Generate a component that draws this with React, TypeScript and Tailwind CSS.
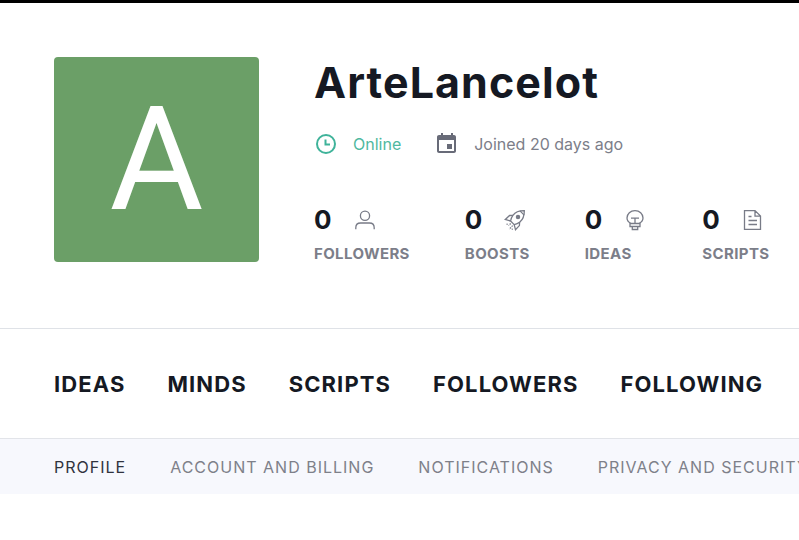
import { ReactNode } from "react";

const iconClass = "h-6 w-6 text-[#787b87]";

function UserIcon() {
  return (
    <svg className={iconClass} viewBox="0 0 24 24" fill="none" stroke="currentColor" strokeWidth="1.3" aria-hidden="true">
      <circle cx="12" cy="7.8" r="4.6" />
      <path d="M2.8 21.2v-1.4c0-2.9 2-4.8 4.8-4.8h8.8c2.8 0 4.8 1.9 4.8 4.8v1.4" />
    </svg>
  );
}

function RocketIcon() {
  return (
    <svg className={iconClass} viewBox="0 0 24 24" fill="none" stroke="currentColor" strokeWidth="1.3" aria-hidden="true">
      <path d="M21.3 2.7c-5-.1-9 1.5-11.4 4.7-1.3 1.8-2.1 3.7-2.3 5.6l3.6 3.6c2.2-.3 4-1.1 5.7-2.6 3-2.6 4.5-6.4 4.4-11.3z" />
      <path d="M10 7.3 6.6 7.5 2.3 11.5l5.3 1.5M16.6 14.2l-.2 3.4-3.9 4.2-1.3-5.2M17 2.9l4.2 4.2" />
      <circle cx="15" cy="9" r="1.6" fill="currentColor" />
      <path d="M7.7 15.5 5.6 17.6M9.7 17.6l-3.6 3.6M4.5 15.8l-.8.8M9.6 20.7l-.8.8" strokeDasharray="1.5 1" />
    </svg>
  );
}

function BulbIcon() {
  return (
    <svg className={iconClass} viewBox="0 0 24 24" fill="none" stroke="currentColor" strokeWidth="1.3" aria-hidden="true">
      <path d="M8 15.5C5.5 14.2 4 12.5 4 10c0-4.3 3.5-7.4 8-7.4s8 3.1 8 7.4c0 2.5-1.5 4.2-4 5.5" />
      <path d="M8 10.2h8M12 10.2v5.2M7 15.5h10v3H7zM9.3 18.5v3h5.4v-3" />
    </svg>
  );
}

function ScriptIcon() {
  return (
    <svg className={iconClass} viewBox="0 0 24 24" fill="none" stroke="currentColor" strokeWidth="1.3" aria-hidden="true">
      <path d="M3.5 2.6H14l5.5 5.5v13.3h-16zM14 2.6v5.5h5.5M7.5 8.5h3M7.5 12.5h8.5M7.5 16.5h8.5" />
    </svg>
  );
}

const stats: { label: string; icon: ReactNode }[] = [
  { label: "FOLLOWERS", icon: <UserIcon /> },
  { label: "BOOSTS", icon: <RocketIcon /> },
  { label: "IDEAS", icon: <BulbIcon /> },
  { label: "SCRIPTS", icon: <ScriptIcon /> },
];

const sections = ["IDEAS", "MINDS", "SCRIPTS", "FOLLOWERS", "FOLLOWING"];
const settings = ["PROFILE", "ACCOUNT AND BILLING", "NOTIFICATIONS", "PRIVACY AND SECURITY"];

export default function App() {
  return (
    <div className="overflow-x-hidden border-t-3 border-black bg-white font-['Inter',sans-serif] text-[#151923]">
      <header className="flex gap-[55px] px-[54px] pt-[54px] pb-16">
        <div className="flex size-[205px] shrink-0 items-center justify-center rounded bg-[#6b9f67] font-['Roboto',sans-serif] text-[144px] leading-none text-white">
          A
        </div>
        <div className="whitespace-nowrap">
          <h1 className="text-[43px] leading-[50px] font-bold tracking-wide">ArteLancelot</h1>
          <div className="mt-[25px] flex h-6 items-center gap-[34px] text-base">
            <span className="flex items-center gap-[15px] text-[#50b8a0]">
              <svg className="size-6" viewBox="0 0 24 24" fill="none" stroke="#3fb39a" strokeWidth="2" aria-hidden="true">
                <circle cx="12" cy="12" r="9" />
                <path d="M11.5 7.5v5h4.5" />
              </svg>
              Online
            </span>
            <span className="flex items-center gap-[15px] text-[#7c7e89]">
              <svg className="size-6 text-[#686b78]" viewBox="0 0 24 24" fill="currentColor" aria-hidden="true">
                <path d="M17 12h-5v5h5v-5zM16 1v2H8V1H6v2H4c-1.1 0-2 .9-2 2v14c0 1.1.9 2 2 2h15c1.1 0 2-.9 2-2V5c0-1.1-.9-2-2-2h-1V1h-2zm3 18H4V8h15v11z" />
              </svg>
              Joined 20 days ago
            </span>
          </div>
          <dl className="mt-12 flex gap-[55px]">
            {stats.map((s) => (
              <div key={s.label} className="flex flex-col-reverse">
                <dt className="mt-2 text-[15px] leading-[20px] font-bold tracking-wide text-[#7c7e89]">{s.label}</dt>
                <dd className="flex h-8 items-center gap-[21px] text-[26px] leading-8 font-bold">
                  0{s.icon}
                </dd>
              </div>
            ))}
          </dl>
        </div>
      </header>
      <nav aria-label="Sections" className="flex h-[110px] items-center gap-[42px] border-t border-[#dfe2e7] px-[54px] text-[22px] leading-7 font-bold tracking-wider whitespace-nowrap">
        {sections.map((s) => (
          <a key={s} href={"#" + s.toLowerCase()}>{s}</a>
        ))}
      </nav>
      <nav aria-label="Settings" className="flex h-14 items-center gap-11 border-t border-[#e2e4e9] bg-[#f7f8fd] px-[54px] text-base tracking-[1px] whitespace-nowrap text-[#7e8089]">
        {settings.map((s, i) => (
          <a key={s} href="#settings" className={i === 0 ? "text-[#30333e]" : ""}>{s}</a>
        ))}
      </nav>
    </div>
  );
}
